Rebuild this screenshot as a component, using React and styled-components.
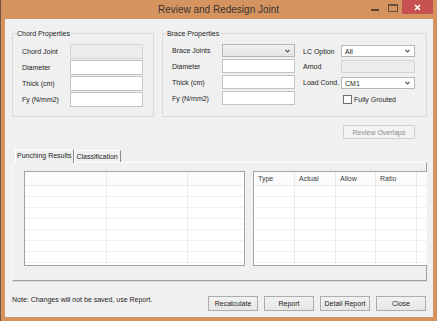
import React from 'react';
import styled, { createGlobalStyle } from 'styled-components';

const Global = createGlobalStyle`
  html, body { margin: 0; padding: 0; background: #d5935f; }
  body { font-family: "Liberation Sans", Arial, sans-serif; }
  * { box-sizing: border-box; }
`;

const Window = styled.div`
  width: 437px;
  height: 321px;
  background: #d5935f;
  border-left: 1px solid #6e5442;
  display: flex;
  flex-direction: column;
  overflow: hidden;
`;

const TitleBar = styled.div`
  height: 19px;
  flex: none;
  display: grid;
  grid-template-columns: 1fr auto 1fr;
  align-items: center;
`;

const Title = styled.div`
  grid-column: 2;
  font-size: 10px;
  line-height: 12px;
  color: #383432;
  margin-left: -1px;
  padding-top: 1px;
`;

const Controls = styled.div`
  grid-column: 3;
  justify-self: end;
  align-self: start;
  display: flex;
  margin-right: 4px;
`;

const CtrlButton = styled.div`
  width: ${p => p.$w}px;
  height: 14px;
  display: flex;
  justify-content: center;
  align-items: ${p => (p.$bottom ? 'flex-end' : 'center')};
  padding-bottom: ${p => (p.$bottom ? 3 : 0)}px;
  background: ${p => p.$bg || 'transparent'};
`;

const MinGlyph = styled.span`
  width: 8px;
  height: 2px;
  background: #5c4535;
`;

const MaxGlyph = styled.span`
  width: 10px;
  height: 8px;
  border: 1px solid #6a4f3c;
  border-top-width: 2px;
  margin-top: 1px;
`;

const Client = styled.div`
  margin: 0 4px 4px 4px;
  height: 298px;
  flex: none;
  background: #f0f0f0;
  padding: 14px 6px 6px 7px;
  display: flex;
  flex-direction: column;
  font-size: 7px;
  line-height: 9px;
  color: #1e1e1e;
`;

const GroupRow = styled.div`
  display: flex;
  gap: 8px;
  height: 84px;
  flex: none;
`;

const GroupBox = styled.section`
  width: ${p => p.$w}px;
  border: 1px solid #dadada;
  display: flex;
  flex-direction: column;
`;

const GroupTitle = styled.div`
  width: fit-content;
  margin: -5px 0 0 3px;
  padding: 0 1px;
  background: #f0f0f0;
  line-height: 9px;
  color: #1e1e1e;
`;

const GroupBody = styled.div`
  display: flex;
  gap: 8px;
  margin: 6px 0 0 9px;
  align-items: flex-start;
`;

const FormGrid = styled.div`
  display: grid;
  grid-template-columns: ${p => p.$cols};
  grid-template-rows: ${p => p.$rows};
  row-gap: ${p => p.$gap}px;
  margin-top: ${p => p.$mt || 0}px;
`;

const Label = styled.div`
  display: flex;
  align-items: center;
  white-space: nowrap;
`;

const TextBox = styled.div`
  align-self: end;
  height: ${p => p.$h}px;
  background: ${p => (p.$disabled ? '#ececec' : '#ffffff')};
  border: 1px solid ${p => (p.$disabled ? '#d6d6d6' : '#c3c3c3')};
`;

const Combo = styled.div`
  align-self: end;
  height: ${p => p.$h}px;
  border: 1px solid #b7b7b7;
  background: ${p => (p.$white ? '#ffffff' : 'linear-gradient(#f0f0f0, #e4e4e4)')};
  display: flex;
  align-items: center;
  justify-content: space-between;
  padding: 0 4px 0 3px;
  color: #1e1e1e;
`;

const CheckRow = styled.div`
  align-self: end;
  display: flex;
  align-items: center;
  gap: 2px;
  padding-left: 2px;
  height: 9px;
`;

const CheckBox = styled.span`
  width: 9px;
  height: 9px;
  background: #fff;
  border: 1px solid #707070;
  flex: none;
`;

const ActionRow = styled.div`
  display: flex;
  justify-content: flex-end;
  padding-right: 12px;
  margin-top: 8px;
  flex: none;
`;

const Button = styled.div`
  width: ${p => p.$w}px;
  height: ${p => p.$h}px;
  display: flex;
  align-items: center;
  justify-content: center;
  border: 1px solid ${p => (p.$disabled ? '#cfcfcf' : '#adadad')};
  background: ${p => (p.$disabled ? '#f3f3f3' : 'linear-gradient(#f2f2f2, #e6e6e6)')};
  color: ${p => (p.$disabled ? '#8d8d8d' : '#1a1a1a')};
  white-space: nowrap;
`;

const TabStrip = styled.div`
  display: flex;
  align-items: flex-end;
  height: 13px;
  margin-top: 10px;
  padding-left: 3px;
  flex: none;
`;

const Tab = styled.div`
  position: relative;
  z-index: ${p => (p.$active ? 1 : 0)};
  height: ${p => (p.$active ? 14 : 12)}px;
  margin-bottom: ${p => (p.$active ? -1 : 0)}px;
  padding: 0 2px 0 1px;
  background: #f0f0f0;
  border-left: 1px solid #ffffff;
  border-top: 1px solid #ffffff;
  border-right: 1px solid #8c8c8c;
  display: flex;
  align-items: ${p => (p.$active ? 'flex-start' : 'center')};
  padding-top: ${p => (p.$active ? 1 : 0)}px;
  white-space: nowrap;
`;

const TabPage = styled.div`
  height: 119px;
  flex: none;
  border-top: 1px solid #fbfbfb;
  border-left: 1px solid #fbfbfb;
  border-right: 1px solid #a0a0a0;
  border-bottom: 1px solid #a0a0a0;
  box-shadow: 0 1px 0 #dcdcdc;
  padding: 8px 0 0 11px;
  display: flex;
  gap: 8px;
  align-items: flex-start;
`;

const DataGrid = styled.div`
  height: 95px;
  width: ${p => (p.$w ? `${p.$w}px` : 'auto')};
  flex: ${p => (p.$w ? 'none' : '1')};
  margin-right: ${p => (p.$w ? 0 : -1)}px;
  overflow: hidden;
  background: #ffffff;
  border: 1px solid #a4a4a4;
  border-right: ${p => (p.$w ? '1px solid #a4a4a4' : 'none')};
  box-shadow: inset 1px 1px 0 #e0e0e0;
`;

const GridRow = styled.div`
  display: flex;
  height: ${p => (p.$head ? 14 : 11)}px;
  border-bottom: 1px solid ${p => (p.$head ? '#ececec' : '#f1f1f1')};
  background: ${p => (p.$head ? '#fcfcfd' : '#ffffff')};
`;

const GridCell = styled.div`
  flex: 0 0 ${p => p.$w}px;
  border-right: 1px solid #ebebeb;
  padding-left: 4px;
  display: flex;
  align-items: center;
  white-space: nowrap;
  color: #3a3a3a;
`;

const Footer = styled.div`
  display: flex;
  justify-content: space-between;
  align-items: flex-start;
  margin-top: 15px;
  flex: none;
`;

const Note = styled.div`
  margin-top: -1px;
  line-height: 9px;
  white-space: nowrap;
`;

const ButtonGroup = styled.div`
  display: flex;
  gap: 6px;
  margin-right: 1px;
`;

const Chevron = () => (
  <svg width="5" height="4" viewBox="0 0 5 4">
    <path d="M0.5 0.8 L2.5 2.9 L4.5 0.8" fill="none" stroke="#4a4a4a" strokeWidth="1.1" />
  </svg>
);

const CloseX = () => (
  <svg width="7" height="7" viewBox="0 0 7 7">
    <path d="M1 1 L6 6 M6 1 L1 6" stroke="#ffffff" strokeWidth="1.6" />
  </svg>
);

const chordFields = [
  { label: 'Chord Joint', disabled: true },
  { label: 'Diameter' },
  { label: 'Thick (cm)' },
  { label: 'Fy (N/mm2)' },
];

const braceFields = ['Diameter', 'Thick (cm)', 'Fy (N/mm2)'];

const leftCols = [82, 81, 80];
const rightCols = [41, 41, 40, 41, 30];
const rightHeads = ['Type', 'Actual', 'Allow', 'Ratio', ''];
const DATA_ROWS = 8;

const Grid = ({ cols, heads, w }) => (
  <DataGrid $w={w}>
    <GridRow $head>
      {cols.map((c, i) => (
        <GridCell key={i} $w={c}>{heads ? heads[i] : ''}</GridCell>
      ))}
    </GridRow>
    {Array.from({ length: DATA_ROWS }).map((_, r) => (
      <GridRow key={r}>
        {cols.map((c, i) => (
          <GridCell key={i} $w={c} />
        ))}
      </GridRow>
    ))}
  </DataGrid>
);

export default function App() {
  return (
    <>
      <Global />
      <Window>
        <TitleBar>
          <Title>Review and Redesign Joint</Title>
          <Controls>
            <CtrlButton $w={18} $bottom>
              <MinGlyph />
            </CtrlButton>
            <CtrlButton $w={18}>
              <MaxGlyph />
            </CtrlButton>
            <CtrlButton $w={31} $bg="#c75150">
              <CloseX />
            </CtrlButton>
          </Controls>
        </TitleBar>
        <Client>
          <GroupRow>
            <GroupBox $w={142}>
              <GroupTitle>Chord Properties</GroupTitle>
              <GroupBody>
                <FormGrid $cols="48px 73px" $rows="repeat(4, 15px)" $gap={1}>
                  {chordFields.map(f => (
                    <React.Fragment key={f.label}>
                      <Label>{f.label}</Label>
                      <TextBox $h={15} $disabled={f.disabled} />
                    </React.Fragment>
                  ))}
                </FormGrid>
              </GroupBody>
            </GroupBox>
            <GroupBox $w={265}>
              <GroupTitle>Brace Properties</GroupTitle>
              <GroupBody>
                <FormGrid $cols="50px 73px" $rows="13px 14px 14px 14px" $gap={2}>
                  <Label>Brace Joints</Label>
                  <Combo $h={13}>
                    <span />
                    <Chevron />
                  </Combo>
                  {braceFields.map(l => (
                    <React.Fragment key={l}>
                      <Label>{l}</Label>
                      <TextBox $h={14} />
                    </React.Fragment>
                  ))}
                </FormGrid>
                <FormGrid $cols="38px 74px" $rows="12px 13px 13px 12px" $gap={3} $mt={1}>
                  <Label>LC Option</Label>
                  <Combo $h={12} $white>
                    <span>All</span>
                    <Chevron />
                  </Combo>
                  <Label>Amod</Label>
                  <TextBox $h={13} $disabled />
                  <Label>Load Cond.</Label>
                  <Combo $h={12} $white>
                    <span>CM1</span>
                    <Chevron />
                  </Combo>
                  <span />
                  <CheckRow>
                    <CheckBox />
                    <span>Fully Grouted</span>
                  </CheckRow>
                </FormGrid>
              </GroupBody>
            </GroupBox>
          </GroupRow>

          <ActionRow>
            <Button $w={72} $h={14} $disabled>Review Overlaps</Button>
          </ActionRow>

          <TabStrip>
            <Tab $active>Punching Results</Tab>
            <Tab>Classification</Tab>
          </TabStrip>
          <TabPage>
            <Grid cols={leftCols} w={221} />
            <Grid cols={rightCols} heads={rightHeads} />
          </TabPage>

          <Footer>
            <Note>Note: Changes will not be saved, use Report.</Note>
            <ButtonGroup>
              <Button $w={50} $h={15}>Recalculate</Button>
              <Button $w={50} $h={15}>Report</Button>
              <Button $w={50} $h={15}>Detail Report</Button>
              <Button $w={50} $h={15}>Close</Button>
            </ButtonGroup>
          </Footer>
        </Client>
      </Window>
    </>
  );
}
